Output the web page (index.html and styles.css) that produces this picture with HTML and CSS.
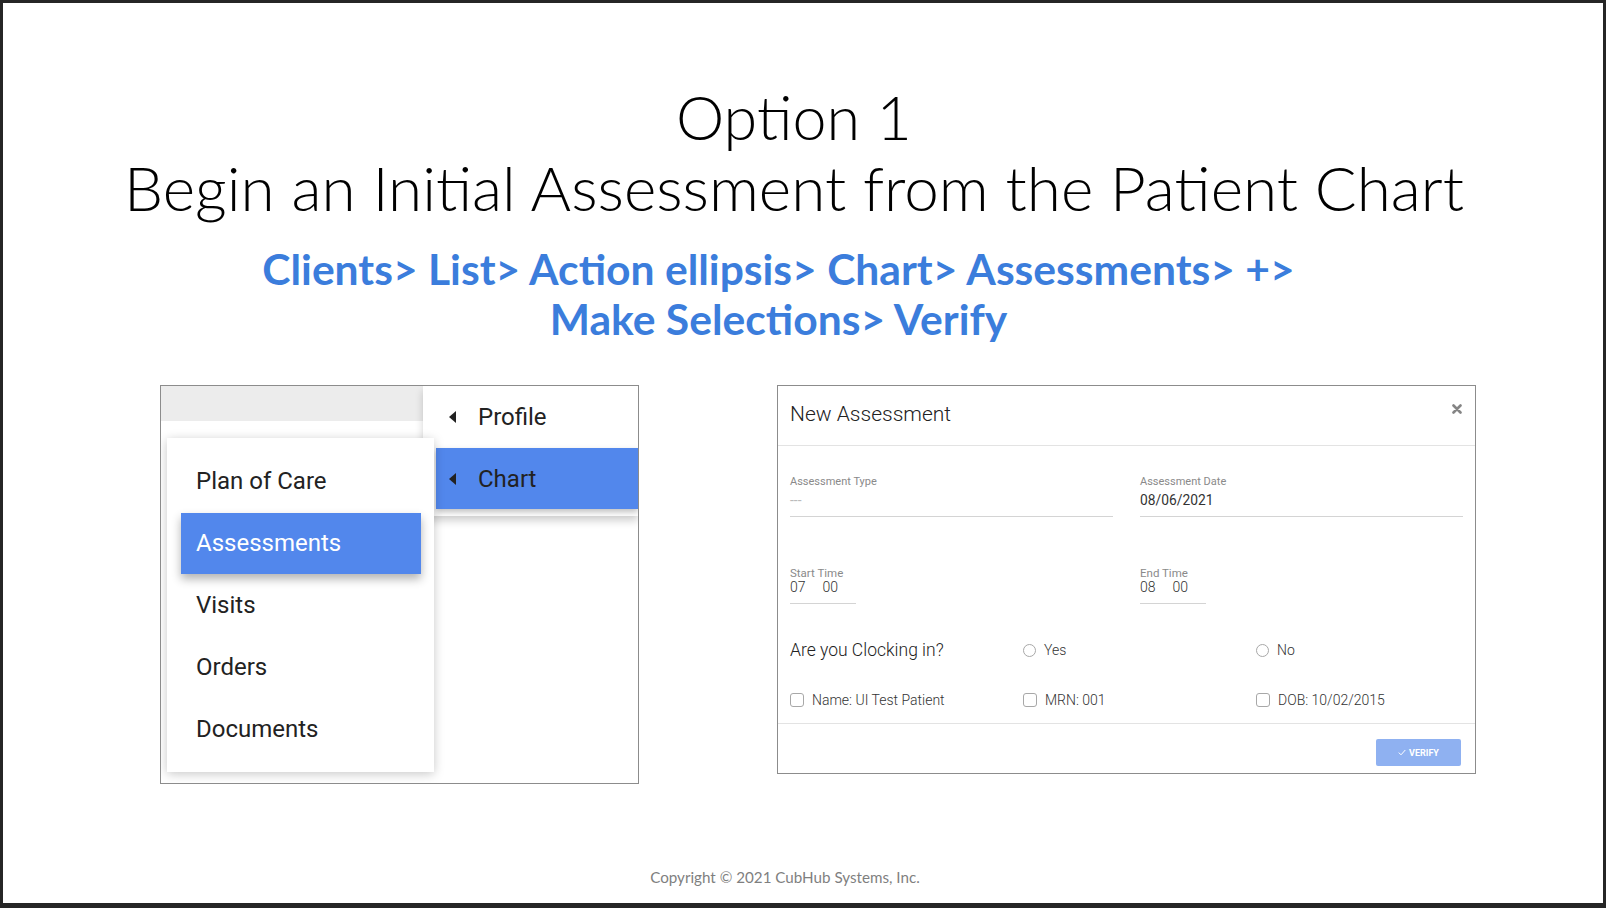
FILE: index.html
```html
<!DOCTYPE html>
<html lang="en">
<head>
  <meta charset="UTF-8" />
  <meta name="viewport" content="width=device-width, initial-scale=1.0"/>
  <title>Option 1 - Initial Assessment</title>
  <link rel="stylesheet" href="styles.css">
</head>
<body>
  <div class="slide">
    <div class="title">
      <h1>Option 1</h1>
      <h2>Begin an Initial Assessment from the Patient Chart</h2>
    </div>
    <div class="path">
      Clients&gt; List&gt; Action ellipsis&gt; Chart&gt; Assessments&gt; +&gt;<br>
      Make Selections&gt; Verify
    </div>

    <div class="shots">
      <!-- menu screenshot -->
      <div class="shot menu-shot">
        <div class="shot-top">
          <div class="grey-band"></div>
          <div class="submenu">
            <div class="sub-item"><span class="caret"></span>Profile</div>
            <div class="sub-item active"><span class="caret"></span>Chart</div>
          </div>
        </div>
        <div class="menu-card">
          <div class="menu-item">Plan of Care</div>
          <div class="menu-item active">Assessments</div>
          <div class="menu-item">Visits</div>
          <div class="menu-item">Orders</div>
          <div class="menu-item">Documents</div>
        </div>
      </div>

      <!-- dialog screenshot -->
      <div class="shot dialog">
        <div class="dialog-head">
          <span class="dialog-title">New Assessment</span>
          <svg class="close" width="10" height="10" viewBox="0 0 10 10">
            <path d="M1.5 1.5 L8.5 8.5 M8.5 1.5 L1.5 8.5" stroke="#858585" stroke-width="2.6" stroke-linecap="round"/>
          </svg>
        </div>
        <div class="dialog-body">
          <div class="field-row">
            <div class="field">
              <div class="label">Assessment Type</div>
              <div class="value empty">---</div>
            </div>
            <div class="field">
              <div class="label">Assessment Date</div>
              <div class="value">08/06/2021</div>
            </div>
          </div>
          <div class="field-row times">
            <div class="time">
              <div class="label">Start Time</div>
              <div class="value"><span>07</span><span>00</span></div>
            </div>
            <div class="time">
              <div class="label">End Time</div>
              <div class="value"><span>08</span><span>00</span></div>
            </div>
          </div>
          <div class="choice-row clocking">
            <div class="question">Are you Clocking in?</div>
            <label class="opt"><span class="radio"></span>Yes</label>
            <label class="opt"><span class="radio"></span>No</label>
          </div>
          <div class="choice-row">
            <label class="opt"><span class="check"></span>Name: UI Test Patient</label>
            <label class="opt"><span class="check"></span>MRN: 001</label>
            <label class="opt"><span class="check"></span>DOB: 10/02/2015</label>
          </div>
        </div>
        <div class="dialog-foot">
          <button class="verify">
            <svg width="8" height="7" viewBox="0 0 8 7"><path d="M0.8 3.6 L3 5.8 L7.3 1" fill="none" stroke="#fff" stroke-width="1"/></svg>
            VERIFY
          </button>
        </div>
      </div>
    </div>

    <div class="copyright">Copyright &copy; 2021 CubHub Systems, Inc.</div>
  </div>
</body>
</html>
```

FILE: styles.css
```css
body {
  margin: 0;
  font-family: Lato, "Open Sans", sans-serif;
  background: #262626;
}
.slide {
  width: 1606px;
  height: 908px;
  box-sizing: border-box;
  border: 3px solid #262626;
  border-bottom-width: 5px;
  background: white;
  display: flex;
  flex-direction: column;
  align-items: center;
}
.title {
  margin-top: 79px;
  padding-right: 18px;
  text-align: center;
  color: #000;
}
.title h1,
.title h2 {
  margin: 0;
  font-weight: 300;
  font-size: 62px;
  line-height: 70px;
}
.title h1 {
  font-size: 61px;
}
.path {
  margin-top: 22px;
  padding-right: 49px;
  text-align: center;
  color: #3b7ddc;
  font-weight: 700;
  font-size: 42.6px;
  line-height: 50px;
}

/* screenshots */
.shots {
  align-self: stretch;
  display: flex;
  align-items: flex-start;
  gap: 138px;
  padding-left: 157px;
  margin-top: 41px;
  font-family: Roboto, sans-serif;
}
.shot {
  border: 1px solid #8c8c8c;
  background: white;
}

.menu-shot {
  position: relative;
  width: 477px;
  height: 397px;
  overflow: hidden;
}
.shot-top {
  display: flex;
  align-items: flex-start;
}
.grey-band {
  width: 262px;
  height: 35px;
  background: #ececec;
}
.submenu {
  flex: 1;
  padding: 0 0 7px 13px;
  background: white;
  box-shadow: 0 5px 8px rgba(0, 0, 0, 0.18);
}
.sub-item {
  display: flex;
  align-items: center;
  height: 62px;
  padding-left: 13px;
  font-size: 24px;
  color: #222;
}
.sub-item.active {
  height: 61px;
  background: #5287ec;
  box-shadow: 0 3px 6px rgba(0, 0, 0, 0.25);
}
.caret {
  width: 0;
  height: 0;
  border-top: 6px solid transparent;
  border-bottom: 6px solid transparent;
  border-right: 7px solid #222;
  margin-right: 22px;
}
.menu-card {
  position: absolute;
  left: 6px;
  top: 52px;
  width: 267px;
  height: 334px;
  box-sizing: border-box;
  padding-top: 13px;
  background: white;
  box-shadow: 0 2px 10px rgba(0, 0, 0, 0.22);
}
.menu-item {
  height: 62px;
  line-height: 60px;
  padding-left: 29px;
  font-size: 24px;
  color: #222;
}
.menu-item.active {
  margin: 0 13px 0 14px;
  padding-left: 15px;
  height: 61px;
  line-height: 61px;
  margin-bottom: 1px;
  background: #5287ec;
  color: white;
  box-shadow: 0 5px 9px rgba(0, 0, 0, 0.3);
}

/* dialog */
.dialog {
  width: 697px;
  height: 387px;
  display: flex;
  flex-direction: column;
  color: #333;
}
.dialog-head {
  height: 59px;
  display: flex;
  align-items: center;
  justify-content: space-between;
  padding: 0 13px 0 12px;
  border-bottom: 1px solid #e3e3e3;
}
.dialog-title {
  font-size: 21px;
  font-weight: 300;
  color: #222;
  margin-top: -3px;
}
.close {
  margin-top: -14px;
}
.dialog-body {
  flex: 1;
  padding: 29px 12px 0 12px;
  border-bottom: 1px solid #e3e3e3;
}
.field-row {
  display: flex;
  gap: 27px;
}
.field {
  flex: 1;
  border-bottom: 1px solid #d4d4d4;
}
.label {
  font-size: 11px;
  line-height: 13px;
  color: #8a8a8a;
}
.field .label {
  height: 16px;
}
.value {
  font-size: 13.8px;
  line-height: 18px;
  height: 25px;
  color: #333;
}
.value.empty {
  color: #bbb;
}
.times {
  margin-top: 50px;
  gap: 284px;
}
.time {
  width: 66px;
  border-bottom: 1px solid #d4d4d4;
}
.time .label {
  font-size: 11.5px;
}
.time .value {
  line-height: 14px;
  height: 23px;
  font-size: 14px;
  font-weight: 300;
}
.time .value span + span {
  margin-left: 17px;
}
.choice-row {
  display: grid;
  grid-template-columns: 233px 233px 1fr;
  align-items: center;
  height: 24px;
  margin-top: 26px;
  font-size: 14px;
  font-weight: 300;
  color: #333;
}
.clocking {
  margin-top: 34px;
}
.question {
  font-size: 17.5px;
  font-weight: 300;
  color: #222;
}
.opt {
  display: flex;
  align-items: center;
}
.radio {
  width: 11px;
  height: 11px;
  border: 1px solid #a8a8a8;
  border-radius: 50%;
  margin-right: 8px;
}
.check {
  width: 12px;
  height: 12px;
  border: 1px solid #a8a8a8;
  border-radius: 3px;
  margin-right: 8px;
}
.dialog-foot {
  height: 49px;
  display: flex;
  justify-content: flex-end;
  align-items: flex-start;
  padding: 15px 14px 0 0;
  box-sizing: border-box;
}
.verify {
  width: 85px;
  height: 27px;
  border: none;
  border-radius: 2px;
  background: #8fb1f1;
  color: white;
  font-family: Roboto, sans-serif;
  font-size: 9px;
  font-weight: 700;
  display: flex;
  align-items: center;
  justify-content: center;
  gap: 3px;
  padding: 0;
}

.copyright {
  margin-top: auto;
  margin-bottom: 17px;
  padding-right: 36px;
  font-size: 15.2px;
  line-height: 18px;
  color: #7f7f7f;
}
```
